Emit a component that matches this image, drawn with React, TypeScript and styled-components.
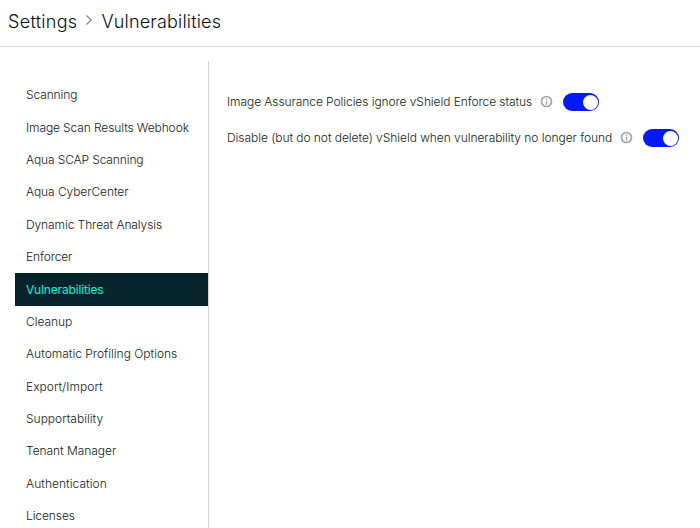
import React from 'react';
import styled, { createGlobalStyle } from 'styled-components';

const Global = createGlobalStyle`
  * { box-sizing: border-box; }
  body { margin: 0; background: #fff; font-family: Inter, "Liberation Sans", sans-serif; color: #101b20; overflow: hidden; }
`;
const Page = styled.div`
  height: 528px; display: flex; flex-direction: column; overflow: hidden;
`;
const Header = styled.header`
  height: 47px; flex: none; display: flex; align-items: center; padding: 0 8px 3px;
  border-bottom: 1px solid #d8d8d8; font-size: 18px; font-weight: 300; color: #020f14;
`;
const Crumb = styled.span<{ $tracking: number }>`
  white-space: nowrap; letter-spacing: ${p => p.$tracking}px;
`;
const Chevron = styled.svg`margin: 0 8px 3px; flex: none;`;
const Body = styled.div`
  flex: 1; display: flex; min-height: 0; padding: 14px 0 0 15px;
`;
const Nav = styled.nav`
  width: 194px; flex: none; padding-top: 18px; border-right: 1px solid #d4d4d4; overflow: hidden;
`;
const NavItem = styled.a<{ $active?: boolean; $tracking: number }>`
  display: flex; align-items: center; height: 32.4px; padding: 0 0 1px 11px; font-size: 12px; white-space: nowrap;
  letter-spacing: ${p => p.$tracking}px;
  font-weight: ${p => (p.$active ? 400 : 300)};
  color: ${p => (p.$active ? '#08f5d8' : '#101b20')};
  background: ${p => (p.$active ? '#07242d' : 'transparent')};
`;
const Content = styled.main`
  padding: 23px 0 0 18px; flex: 1;
`;
const Row = styled.div`
  display: flex; align-items: center; height: 36px; font-size: 12px; font-weight: 300; white-space: nowrap;
`;
const Label = styled.span<{ $tracking: number }>`
  padding-bottom: 1px; letter-spacing: ${p => p.$tracking}px;
`;
const Info = styled.svg`margin: 0 10px 2px 8px; flex: none;`;
const Toggle = styled.span`
  width: 36px; height: 18px; border-radius: 9px; background: #0019ff; display: flex; align-items: center; justify-content: flex-end; padding-right: 1px;
`;
const Knob = styled.span`width: 15px; height: 15px; border-radius: 50%; background: #fff;`;

const sections = [
  { name: 'Scanning', tracking: -0.12 },
  { name: 'Image Scan Results Webhook', tracking: -0.11 },
  { name: 'Aqua SCAP Scanning', tracking: -0.12 },
  { name: 'Aqua CyberCenter', tracking: -0.08 },
  { name: 'Dynamic Threat Analysis', tracking: -0.09 },
  { name: 'Enforcer', tracking: -0.12 },
  { name: 'Vulnerabilities', tracking: -0.16 },
  { name: 'Cleanup', tracking: -0.05 },
  { name: 'Automatic Profiling Options', tracking: 0 },
  { name: 'Export/Import', tracking: 0.03 },
  { name: 'Supportability', tracking: 0 },
  { name: 'Tenant Manager', tracking: -0.05 },
  { name: 'Authentication', tracking: 0.05 },
  { name: 'Licenses', tracking: -0.1 },
];
const options = [
  { label: 'Image Assurance Policies ignore vShield Enforce status', tracking: -0.075 },
  { label: 'Disable (but do not delete) vShield when vulnerability no longer found', tracking: -0.055 },
];

export default function App() {
  return (
    <Page>
      <Global />
      <Header>
        <Crumb $tracking={0.3}>Settings</Crumb>
        <Chevron width="8" height="12" viewBox="0 0 8 12" fill="none" stroke="#6f8294" strokeWidth="1.1"><path d="M1.5 1.5L6.3 6l-4.8 4.5" /></Chevron>
        <Crumb $tracking={0.18}>Vulnerabilities</Crumb>
      </Header>
      <Body>
        <Nav>
          {sections.map(s => (
            <NavItem key={s.name} $active={s.name === 'Vulnerabilities'} $tracking={s.tracking}>{s.name}</NavItem>
          ))}
        </Nav>
        <Content>
          {options.map(o => (
            <Row key={o.label}>
              <Label $tracking={o.tracking}>{o.label}</Label>
              <Info width="13" height="13" viewBox="0 0 13 13" fill="none" stroke="#9aa4ae">
                <circle cx="6.5" cy="6.5" r="5" strokeWidth="1.7" /><path d="M6.5 3.3v1.4M6.5 5.7v4" strokeWidth="1.3" />
              </Info>
              <Toggle><Knob /></Toggle>
            </Row>
          ))}
        </Content>
      </Body>
    </Page>
  );
}
